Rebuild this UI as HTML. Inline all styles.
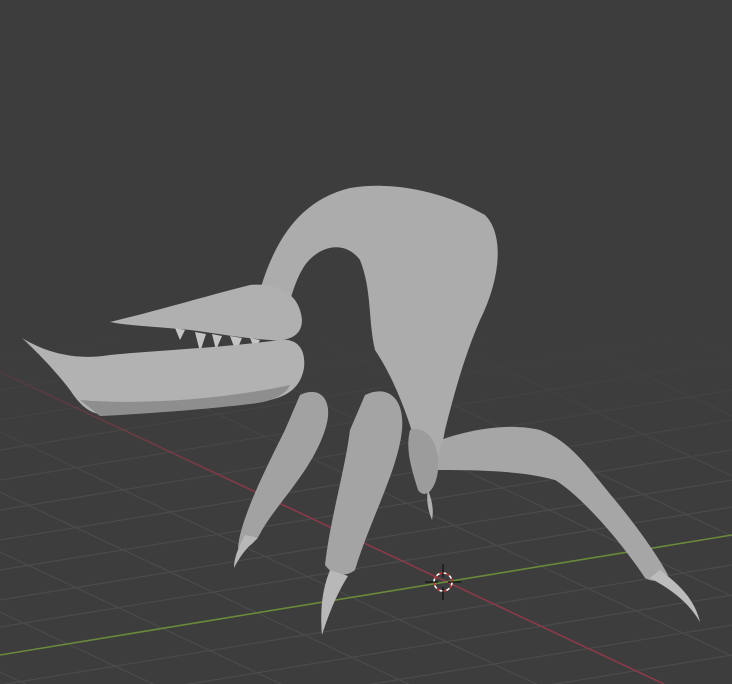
<!DOCTYPE html>
<html><head><meta charset="utf-8"><style>
html,body{margin:0;padding:0;background:#3d3d3d;width:732px;height:684px;overflow:hidden;}
svg{display:block}
</style></head><body>
<svg width="732" height="684" viewBox="0 0 732 684" xmlns="http://www.w3.org/2000/svg">
<defs>
<linearGradient id="fade" gradientUnits="userSpaceOnUse" x1="0" y1="330" x2="0" y2="500">
<stop offset="0" stop-color="#000"/><stop offset="1" stop-color="#fff"/></linearGradient>
<mask id="m" maskUnits="userSpaceOnUse" x="0" y="0" width="732" height="684"><rect x="0" y="0" width="732" height="684" fill="url(#fade)"/></mask>
<linearGradient id="body" x1="0" y1="0" x2="1" y2="1"><stop offset="0" stop-color="#b4b4b4"/><stop offset="1" stop-color="#8e8e8e"/></linearGradient>
</defs>
<rect width="732" height="684" fill="#3d3d3d"/>
<g mask="url(#m)" stroke="#4b4b4b" stroke-width="1.2">
<line x1="0" y1="12" x2="732" y2="356"/><line x1="0" y1="72" x2="732" y2="416"/>
<line x1="0" y1="132" x2="732" y2="476"/><line x1="0" y1="192" x2="732" y2="536"/>
<line x1="0" y1="252" x2="732" y2="596"/><line x1="0" y1="312" x2="732" y2="656"/>
<line x1="0" y1="432" x2="732" y2="776"/><line x1="0" y1="492" x2="732" y2="836"/>
<line x1="0" y1="552" x2="732" y2="896"/><line x1="0" y1="612" x2="732" y2="956"/>
<line x1="0" y1="672" x2="732" y2="1016"/>
<line x1="0" y1="360" x2="732" y2="240"/><line x1="0" y1="390" x2="732" y2="270"/>
<line x1="0" y1="420" x2="732" y2="300"/><line x1="0" y1="450" x2="732" y2="330"/>
<line x1="0" y1="480" x2="732" y2="360"/><line x1="0" y1="510" x2="732" y2="390"/>
<line x1="0" y1="540" x2="732" y2="420"/><line x1="0" y1="570" x2="732" y2="450"/>
<line x1="0" y1="600" x2="732" y2="480"/><line x1="0" y1="627" x2="732" y2="507"/>
<line x1="0" y1="685" x2="732" y2="565"/><line x1="0" y1="715" x2="732" y2="595"/>
<line x1="0" y1="745" x2="732" y2="625"/><line x1="0" y1="775" x2="732" y2="655"/>
</g>
<g mask="url(#m)">
<line x1="0" y1="372" x2="664" y2="684" stroke="#8a3a48" stroke-width="1.6"/>
<line x1="0" y1="655" x2="732" y2="535" stroke="#6a8a3a" stroke-width="1.6"/>
</g>
<g stroke="none">
<path d="M300,395 C320,385 335,400 325,430 C312,470 280,500 262,530 C255,545 245,550 238,548 C240,520 265,470 285,430 Z" fill="#a2a2a2"/>
<path d="M245,535 C238,548 234,558 234,568 C240,556 248,546 258,538 Z" fill="#b8b8b8"/>
<path d="M365,395 C385,385 405,395 402,430 C398,470 370,520 355,570 C345,578 332,575 325,565 C330,520 345,470 350,430 Z" fill="#a4a4a4"/>
<path d="M330,570 C322,590 320,610 322,635 C330,610 338,592 348,576 Z" fill="#b8b8b8"/>
<path d="M410,455 C440,435 500,420 540,430 C570,440 590,470 615,500 C640,530 660,560 668,575 C660,582 652,582 645,578 C620,540 580,495 555,480 C520,470 470,470 430,470 Z" fill="#a6a6a6"/>
<path d="M660,570 C680,585 695,600 700,622 C690,605 676,592 650,578 Z" fill="#bcbcbc"/>
<path d="M260,290 C275,240 300,200 350,188 C400,180 450,195 485,215 C505,235 500,280 480,320 C465,355 455,390 445,430 C440,460 430,470 420,460 C410,420 395,380 375,350 C368,320 372,290 360,260 C345,240 320,245 305,265 C295,280 290,300 285,320 Z" fill="#acacac"/>
<path d="M410,430 C425,425 440,440 438,470 C436,490 425,500 418,490 C412,470 405,450 410,430 Z" fill="#9c9c9c"/>
<path d="M428,490 C432,500 434,510 432,520 C428,510 426,500 428,490 Z" fill="#b0b0b0"/>
<path d="M110,322 C160,310 210,295 250,285 C280,282 300,295 302,320 C302,335 290,342 270,340 C240,338 215,333 190,330 C160,327 130,326 110,322 Z" fill="#b0b0b0"/>
<path d="M175,328 L180,340 L185,330 Z M195,332 L200,352 L206,334 Z M212,334 L216,350 L222,336 Z M230,336 L236,352 L242,338 Z M250,338 L255,350 L260,340 Z" fill="#c4c4c4"/>
<path d="M22,338 C50,355 80,360 110,355 C160,350 220,348 280,340 C298,338 306,350 304,368 C300,390 285,398 260,402 C220,408 160,412 110,415 C90,416 80,405 70,390 C55,370 35,350 22,338 Z" fill="#b2b2b2"/>
<path d="M80,400 C140,405 220,400 290,385 C285,396 270,402 250,404 C200,410 140,414 100,416 Z" fill="#8e8e8e"/>
</g>
<g transform="translate(443,582)">
<circle r="9" fill="none" stroke="#fff" stroke-width="1.6" stroke-dasharray="4 3"/>
<circle r="9" fill="none" stroke="#c33" stroke-width="1.6" stroke-dasharray="3 4" stroke-dashoffset="3.5"/>
<line x1="0" y1="-18" x2="0" y2="-5" stroke="#111" stroke-width="1.2"/>
<line x1="0" y1="5" x2="0" y2="18" stroke="#111" stroke-width="1.2"/>
<line x1="-18" y1="0" x2="-5" y2="0" stroke="#111" stroke-width="1.2"/>
<line x1="5" y1="0" x2="18" y2="0" stroke="#111" stroke-width="1.2"/>
</g>
</svg>
</body></html>
